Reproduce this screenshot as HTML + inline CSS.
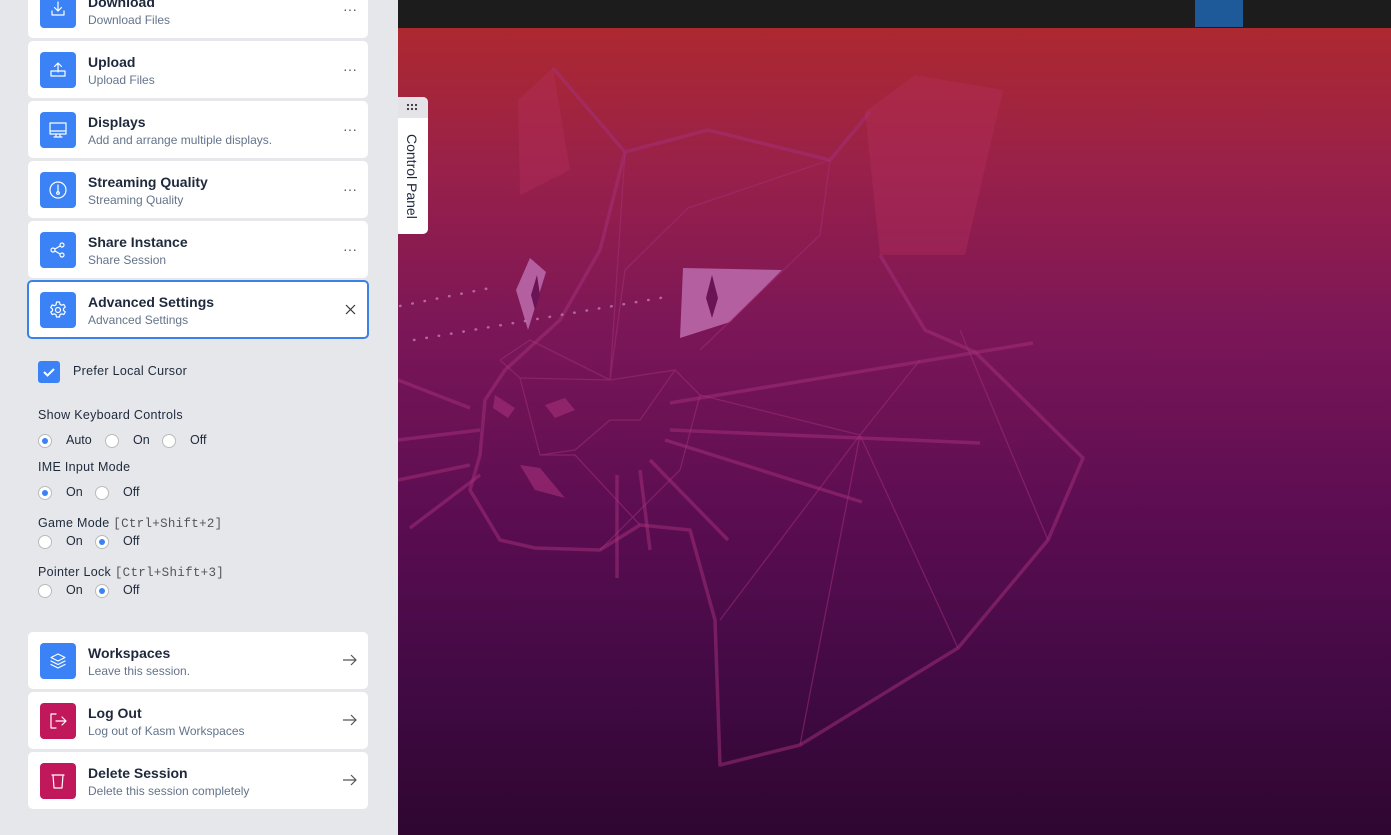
<!DOCTYPE html>
<html><head><meta charset="utf-8"><style>
*{margin:0;padding:0;box-sizing:border-box}
body{width:1391px;height:835px;overflow:hidden;position:relative;font-family:"Liberation Sans",sans-serif;background:#e5e6ea}
#left{position:absolute;left:0;top:0;width:398px;height:835px;background:#e6e7eb}
.card{position:absolute;left:28px;width:340px;height:57px;background:#fff;border-radius:5px}
.card.sel{left:27px;width:342px;height:59px;border:2px solid #3b82e6}
.ic{position:absolute;left:12px;top:11px;width:36px;height:36px;border-radius:4px;background:#3b82f6;display:flex;align-items:center;justify-content:center}
.sel .ic{left:11px;top:10px}
.ic.red{background:#c0185a}
.t{position:absolute;left:60px;top:13px;font-size:14px;font-weight:bold;color:#1e293b}
.s{position:absolute;left:60px;top:32px;font-size:12px;color:#64748b}
.sel .t{left:59px;top:12px}.sel .s{left:59px;top:31px}
.r{position:absolute;right:11px;top:20px;color:#555;font-size:14px}
.lbl{position:absolute;left:38px;font-size:12.5px;color:#1e293b;letter-spacing:.3px}
.mono{font-family:"Liberation Mono",monospace;color:#555;font-size:12.5px}
.rad{position:absolute;width:14px;height:14px;border-radius:50%;border:1px solid #bbb;background:#fff}
.rad.on::after{content:"";position:absolute;left:3px;top:3px;width:6px;height:6px;border-radius:50%;background:#3b82f6}
.rt{position:absolute;font-size:12.5px;color:#1e293b}
svg.i{width:20px;height:20px;fill:none;stroke:#fff;stroke-width:1.2;stroke-linecap:round;stroke-linejoin:round}
svg.ar{position:absolute;right:11px;top:22px}
</style></head><body>
<div id="left">
<div class="card" style="top:-19px"><div class="ic"><svg class="i" viewBox="0 0 20 20"><path d="M10 2v9M6.5 7.5 10 11l3.5-3.5M4 11v4h12v-4"/></svg></div><div class="t">Download</div><div class="s">Download Files</div><div class="r">···</div></div>
<div class="card" style="top:41px"><div class="ic"><svg class="i" viewBox="0 0 20 20"><path d="M10 12V3M6.5 6.5 10 3l3.5 3.5M3 11h14v5H3z"/></svg></div><div class="t">Upload</div><div class="s">Upload Files</div><div class="r">···</div></div>
<div class="card" style="top:101px"><div class="ic"><svg class="i" viewBox="0 0 20 20"><path d="M2 3h16v11H2zM2 11h16M8 14v2M12 14v2M6 17h8"/></svg></div><div class="t">Displays</div><div class="s">Add and arrange multiple displays.</div><div class="r">···</div></div>
<div class="card" style="top:161px"><div class="ic"><svg class="i" viewBox="0 0 20 20"><circle cx="10" cy="10" r="8"/><path d="M10 5v7"/><circle cx="10" cy="13" r="1.3"/></svg></div><div class="t">Streaming Quality</div><div class="s">Streaming Quality</div><div class="r">···</div></div>
<div class="card" style="top:221px"><div class="ic"><svg class="i" viewBox="0 0 20 20"><circle cx="5" cy="10" r="2"/><circle cx="14" cy="5" r="2"/><circle cx="14" cy="15" r="2"/><path d="M7 9l5-3M7 11l5 3"/></svg></div><div class="t">Share Instance</div><div class="s">Share Session</div><div class="r">···</div></div>
<div class="card sel" style="top:280px"><div class="ic"><svg class="i" viewBox="0 0 20 20"><path d="M8.5 2h3l.5 2.3 1.6.9 2.2-.8 1.5 2.6-1.8 1.6v1.8l1.8 1.6-1.5 2.6-2.2-.8-1.6.9-.5 2.3h-3l-.5-2.3-1.6-.9-2.2.8-1.5-2.6L4.5 10.9V9.1L2.7 7.5 4.2 4.9l2.2.8L8 4.8z"/><circle cx="10" cy="10" r="2.5"/></svg></div><div class="t">Advanced Settings</div><div class="s">Advanced Settings</div><svg style="position:absolute;right:11px;top:22px" width="11" height="11" viewBox="0 0 11 11"><path d="M1 1l9 9M10 1l-9 9" stroke="#333" stroke-width="1.2"/></svg></div>

<div style="position:absolute;left:38px;top:361px;width:22px;height:22px;border-radius:3px;background:#3b82f6;display:flex;align-items:center;justify-content:center"><svg width="14" height="14" viewBox="0 0 14 14"><path d="M2 7l3.5 3.5L12 4" stroke="#fff" stroke-width="2" fill="none"/></svg></div>
<div class="lbl" style="left:73px;top:364px">Prefer Local Cursor</div>
<div class="lbl" style="top:408px">Show Keyboard Controls</div>
<div class="rad on" style="left:38px;top:434px"></div><div class="rt" style="left:66px;top:433px">Auto</div>
<div class="rad" style="left:105px;top:434px"></div><div class="rt" style="left:133px;top:433px">On</div>
<div class="rad" style="left:162px;top:434px"></div><div class="rt" style="left:190px;top:433px">Off</div>
<div class="lbl" style="top:460px">IME Input Mode</div>
<div class="rad on" style="left:38px;top:486px"></div><div class="rt" style="left:66px;top:485px">On</div>
<div class="rad" style="left:95px;top:486px"></div><div class="rt" style="left:123px;top:485px">Off</div>
<div class="lbl" style="top:516px">Game Mode <span class="mono">[Ctrl+Shift+2]</span></div>
<div class="rad" style="left:38px;top:535px"></div><div class="rt" style="left:66px;top:534px">On</div>
<div class="rad on" style="left:95px;top:535px"></div><div class="rt" style="left:123px;top:534px">Off</div>
<div class="lbl" style="top:565px">Pointer Lock <span class="mono">[Ctrl+Shift+3]</span></div>
<div class="rad" style="left:38px;top:584px"></div><div class="rt" style="left:66px;top:583px">On</div>
<div class="rad on" style="left:95px;top:584px"></div><div class="rt" style="left:123px;top:583px">Off</div>

<div class="card" style="top:632px"><div class="ic"><svg class="i" viewBox="0 0 20 20"><path d="M10 3l7 3.5-7 3.5-7-3.5zM3 10l7 3.5 7-3.5M3 13.5l7 3.5 7-3.5"/></svg></div><div class="t">Workspaces</div><div class="s">Leave this session.</div><svg class="ar" width="14" height="12" viewBox="0 0 14 12"><path d="M0 6h13M8 1l5 5-5 5" stroke="#555" stroke-width="1.2" fill="none"/></svg></div>
<div class="card" style="top:692px"><div class="ic red"><svg class="i" viewBox="0 0 20 20"><path d="M8 3H3v14h5M8 10h10M14 6l4 4-4 4"/></svg></div><div class="t">Log Out</div><div class="s">Log out of Kasm Workspaces</div><svg class="ar" width="14" height="12" viewBox="0 0 14 12"><path d="M0 6h13M8 1l5 5-5 5" stroke="#555" stroke-width="1.2" fill="none"/></svg></div>
<div class="card" style="top:752px"><div class="ic red"><svg class="i" viewBox="0 0 20 20"><path d="M4 4h12M5 4l1 13h8l1-13"/></svg></div><div class="t">Delete Session</div><div class="s">Delete this session completely</div><svg class="ar" width="14" height="12" viewBox="0 0 14 12"><path d="M0 6h13M8 1l5 5-5 5" stroke="#555" stroke-width="1.2" fill="none"/></svg></div>
</div>

<div style="position:absolute;left:398px;top:0;width:993px;height:28px;background:#1c1c1c"></div>
<div style="position:absolute;left:1195px;top:0;width:48px;height:27px;background:#1e5a9a"></div>
<div style="position:absolute;left:398px;top:28px;width:993px;height:807px;background:linear-gradient(#ad2930 0%,#98204a 18%,#7a1658 38%,#5c0d52 60%,#430a45 80%,#2e0630 100%)"></div>
<svg style="position:absolute;left:398px;top:0" width="993" height="835" viewBox="398 0 993 835" fill="none" stroke="#a63079" stroke-opacity=".5" stroke-linejoin="round">
<path d="M518 100 553 68 570 170 520 195Z M865 112 915 75 1003 90 965 255 880 255Z" fill="#b8305f" fill-opacity=".35" stroke="none"/>
<path d="M683 268 782 270 730 322 680 338Z M530 258 546 272 528 330 516 290Z" fill="#b460a0" stroke="none"/>
<path d="M712 275 718 298 712 318 706 298Z M537 275 540 295 535 310 531 295Z" fill="#6a1456" stroke="none"/>
<path d="M553 68 625 152 708 130 830 160 870 112M625 152 600 250 560 320 505 370 485 400 480 455 470 490 500 540 535 548 600 550 640 525 690 530 715 620 720 765 800 745 958 648 1048 540 1083 458 975 352 925 330 880 255" stroke-width="3.5"/>
<path d="M670 403 1033 343M670 430 980 443M665 440 862 502M650 460 728 540M617 475 617 578M640 470 650 550M398 380 470 408M398 440 480 430M398 480 470 465M410 528 480 475" stroke-width="3.5"/>
<path d="M625 152 610 380 675 370 700 395 860 435 920 360M610 380 530 340 500 360 520 378 610 380M520 378 540 455 575 450 610 420 640 420 675 370M540 455 575 455 640 525M860 435 720 620M860 435 800 745M860 435 958 648M960 330 1048 540M700 395 680 470 600 550M688 208 830 160 820 235 700 350M688 208 625 270 610 380" stroke-width="1.3"/>
<path d="M520 465 535 490 565 498 540 468Z M495 395 515 408 508 418 493 408Z M545 405 565 398 575 410 555 418Z" fill="#a63079" fill-opacity=".6" stroke="none"/>
<path d="M400 306 490 288M414 340 672 296" stroke="#c27ab5" stroke-opacity=".8" stroke-width="2.5" stroke-dasharray="0.5 12" stroke-linecap="round"/>
</svg>

<div style="position:absolute;left:398px;top:97px;width:30px;height:137px;background:#fff;border-radius:0 5px 5px 0"></div>
<div style="position:absolute;left:398px;top:97px;width:30px;height:21px;background:#e4e4e8;border-radius:0 5px 0 0"><svg width="30" height="21" viewBox="0 0 30 21"><g fill="#333"><circle cx="10" cy="8" r="1.1"/><circle cx="14" cy="8" r="1.1"/><circle cx="18" cy="8" r="1.1"/><circle cx="10" cy="12" r="1.1"/><circle cx="14" cy="12" r="1.1"/><circle cx="18" cy="12" r="1.1"/></g></svg></div>
<div style="position:absolute;left:404px;top:134px;writing-mode:vertical-rl;font-size:14px;color:#1e293b">Control Panel</div>
</body></html>
